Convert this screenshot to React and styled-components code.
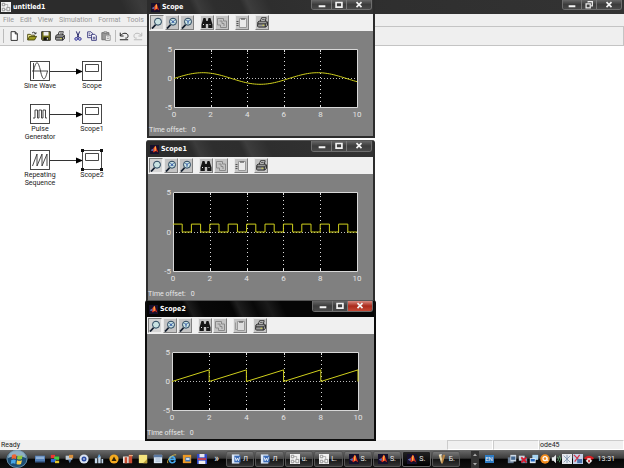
import React from 'react'
import styled, { createGlobalStyle, css } from 'styled-components'

const Global = createGlobalStyle`
  *{box-sizing:border-box;}
  body{
    margin:0;
    overflow:hidden;
    font-family:Roboto, "Liberation Sans", sans-serif;
    font-size:7px;
    line-height:8px;
    color:#222;
  }
  button{
    font:inherit;
    color:inherit;
    padding:0;
    border:0;
    background:none;
  }
  svg{display:block;flex-shrink:0;}
`

/* ---------- icons ---------- */

const Svg = ({size = 10, children, ...rest}) => <svg width={size} height={size}
  viewBox="0 0 12 12" fill="none" aria-hidden="true" {...rest}>{children}</svg>

const Matlab = ({size}) => <Svg size={size}>
  <rect width="12" height="12" fill="#15102c" />
  <path d="M1 7 L4 5 L7 1 L8 2 L11 10 L8 8 L5 10 L3.5 8Z" fill="#d8301e" />
  <path d="M1 7 L4 5 L5 7 L3.5 8Z" fill="#3f6fc0" />
  <path d="M6 4 L7 1 L8 3 L7.5 8 L6 8Z" fill="#ffb347" />
</Svg>

const Simulink = ({size}) => <Svg size={size}>
  <rect width="12" height="12" fill="#f2f2f2" />
  <path d="M1.5 1.5h3v3h-3zM7 6.5h3.5v4H7zM1.5 7.5h3v3h-3z" stroke="#888" />
  <path d="M4.5 3h3.5v3M4.5 9H7" stroke="#aaa" />
</Svg>

const NewFile = () => <Svg>
  <path d="M2.5 .8h5l2.5 2.5v8h-7.5z" fill="#fff" stroke="#111" />
  <path d="M7.5 .8v2.7H10" stroke="#111" />
</Svg>

const Open = () => <Svg>
  <path d="M.8 10.5V4h3l1 1h4v2" fill="#f4ef9a" stroke="#3c3a00" />
  <path d="M.8 10.8 3 6.5h8.5L9 10.8z" fill="#9c9a20" stroke="#3c3a00" />
  <path d="M6 2.5c2-2 3.500-1 4 .8M8.800 3.300h2V1.500" stroke="#222" />
</Svg>

const Save = () => <Svg>
  <path d="M.8.8h10.400v10.400H1.800l-1-1z" fill="#77751c" stroke="#111" />
  <path d="M3 1h6v4.500H3z" fill="#eee" />
  <path d="M3 7.500h6V11H3z" fill="#111" />
  <path d="M7 8.500h1.200v2H7z" fill="#eee" />
</Svg>

const Print = ({size}) => <Svg size={size}>
  <path d="M3.500 5 5 .8h5L8.800 5" fill="#fff" stroke="#222" />
  <path d="M1 5.500 2.500 4.500h8l1 1v3.500l-2 2H1.500L.6 10z" fill="#999" stroke="#222" />
  <path d="M1 7.500h8l2-1.500M9 7.500V11M5.500 2.500h3" stroke="#222" />
  <path d="M6 9h2" stroke="#dddb3a" />
</Svg>

const Cut = () => <Svg>
  <path d="M4 .5 7 8M8 .5 5 8" stroke="#252566" strokeWidth="1.200" />
  <circle cx="3.800" cy="9.500" r="1.600" stroke="#2d2d99" strokeWidth="1.200" />
  <circle cx="8.200" cy="9.500" r="1.600" stroke="#2d2d99" strokeWidth="1.200" />
</Svg>

const Copy = () => <Svg>
  <path d="M.8 1h4l1.700 1.700V8H.8z" fill="#fff" stroke="#252570" />
  <path d="M5.500 4h3.800l1.900 1.900v5.300H5.500z" fill="#fff" stroke="#252570" />
  <path d="M2 3.500h2M2 5.500h2.500M7 7.500h3M7 9.300h3" stroke="#252570" />
</Svg>

const Paste = () => <Svg>
  <path d="M1 2h8.500v8.500H1z" fill="#999" stroke="#666" />
  <path d="M3.500 1h3.500v2H3.500z" fill="#ccc" stroke="#777" />
  <path d="M5.500 5h5.500v6.300H5.500z" fill="#f4f4f4" stroke="#888" />
  <path d="M7 7h2.500M7 9h2.500" stroke="#999" />
</Svg>

// curved arrow over a base line, pointing left (undo) or right (redo)
const Undo = () => <Svg>
  <path d="M1.500 2v4h4M2 5.500C4.500 1.500 10.500 2 10.800 5.500S8.500 8.500 7.500 8.500M1 10.500h10"
    stroke="#222" strokeWidth="1.200" />
</Svg>

const Redo = () => <Svg>
  <path d="M10.500 2v4h-4M10 5.500C7.500 1.500 1.500 2 1.200 5.500S3.500 8.500 4.500 8.500M1 10.500h10"
    stroke="#bbb" strokeWidth="1.200" />
</Svg>

const Zoom = ({mark}) => <Svg size="12">
  <path d="M1 11.500 4.800 7.500" stroke="#111c2c" strokeWidth="1.800" />
  <circle cx="7" cy="4.700" r="3.500" fill="#c9e2e2" stroke="#27435c" />
  {mark === 'x' && <path d="M5.500 3.200l3 3M8.500 3.200l-3 3" stroke="#224a9e" />}
  {mark === 'y' && <path d="M5.500 3 7 4.700 8.500 3M7 4.700v2" stroke="#224a9e" />}
</Svg>

const Binoculars = () => <Svg size="12">
  <path d="M2.500 1h2l.8 3h1.400l.8-3h2l2 6.500V11H7.200V7H4.800v4H.5V7.500z" fill="#151515" />
  <path d="M2 7.500h1M8.500 7.500h1" stroke="#ddd" />
</Svg>

const Axes = () => <Svg size="12">
  <path d="M1.500 1.500h6v2.500h3v6.500h-6V8h-3z" stroke="#8a8a8a" />
  <path d="M3.500 4h2.500v2.500h2V9" stroke="#8a8a8a" />
</Svg>

const Params = ({list}) => <Svg size="12">
  <path d="M3.500 1.500h7v9h-7z" fill={list ? '#eaeaea' : '#ddd'} stroke="#999" />
  <path d="M5 1h4v1.800H5z" fill="#777" />
  {list ? <path d="M.5 4.500h2M.5 6.500h2M.5 8.500h2" stroke="#555" />
    : <path d="M1.500 2.500v7h2" stroke="#999" />}
</Svg>

/* ---------- title bar shared by every window ---------- */

const WindowButtons = ({active, restore, h = 9}) => <Caption $main={restore}>
  <CaptionButton $w={restore ? 18 : 19} $h={h} aria-label="Minimize">
    <Svg><path d="M2 7.500h8" stroke="#f4f4f4" strokeWidth="2.400" /></Svg>
  </CaptionButton>
  <CaptionButton $w={15} $h={h} aria-label={restore ? 'Restore' : 'Maximize'}>
    <Svg>
      {restore ? <path d="M2.500 4.500h5v5h-5zM5 3V2h5v5H8.500" stroke="#eee" strokeWidth="1.500" />
        : <path d="M2.500 3h7v5.500h-7z" stroke="#f4f4f4" strokeWidth="2" />}
    </Svg>
  </CaptionButton>
  <CaptionButton $w={25} $h={h} $close={active} aria-label="Close">
    <Svg><path d="M3 2.500 9 8.500M9 2.500 3 8.500" stroke="#f4f4f4" strokeWidth="2" /></Svg>
  </CaptionButton>
</Caption>

/* ---------- scopes ---------- */

const sine = []
for (let t = 0; t <= 10.001; t += 0.1) sine.push([t, Math.sin(t)])

const pulse = []
for (let t = 0; t < 10; t++) pulse.push([t, 1], [t + 0.5, 1], [t + 0.5, 0], [t + 1, 0])

const saw = []
for (let t = 0; t < 10; t += 2) saw.push([t, 0], [t + 2, 2])
saw.push([10, 0])

const PAD = {left: 25, right: 16, top: 18, bottom: 12}

const Chart = ({width, height, data}) => {
  const right = width - PAD.right
  const bottom = PAD.top + height
  const x = t => PAD.left + t * (right - PAD.left) / 10
  const y = v => PAD.top + (5 - v) * height / 10
  const snap = n => Math.round(n) + 0.5
  const points = data.map(([t, v]) => `${x(t)},${y(v) + 0.5}`).join(' ')

  return <svg width={width} height={bottom + PAD.bottom} role="img" aria-label="Signal plot">
    <rect x={PAD.left} y={PAD.top} width={right - PAD.left} height={height} fill="#000" />
    {[2, 4, 6, 8].map(t => <g key={t} stroke="#ddd">
      <path d={`M${snap(x(t))} ${PAD.top}V${bottom}`} strokeDasharray="1 3" />
      <path d={`M${snap(x(t))} ${PAD.top}v3M${snap(x(t))} ${bottom}v-2`} />
    </g>)}
    <path d={`M${PAD.left} ${snap(y(0))}H${right}`} stroke="#bbb" strokeDasharray="1 2" />
    <path d={`M${PAD.left + 0.5} ${PAD.top + 0.5}H${right + 0.5}V${bottom + 0.5}H${PAD.left + 0.5}Z`}
      stroke="#d8d8d8" fill="none" />
    <polyline points={points} fill="none" stroke="#d0d01c" />
    {[5, 0, -5].map(v => <Tick key={v} x={PAD.left - 2} y={y(v) + 3} textAnchor="end">{v}</Tick>)}
    {[0, 2, 4, 6, 8, 10].map(t => <Tick key={t} x={x(t)} y={bottom + 10} textAnchor="middle">{t}</Tick>)}
  </svg>
}

const Scope = ({title, x, y, w, plot, data, active}) => <ScopeWindow $x={x} $y={y} $w={w} $active={active}>
  <TitleBar $active={active} $h={y ? 16 : 14}>
    <Matlab size="9" />
    <Title>{title}</Title>
    <WindowButtons active={active} h={y ? 10 : 9} />
  </TitleBar>
  <ScopeTools>
    <Tool $pressed aria-label="Zoom"><Zoom /></Tool>
    <Tool aria-label="Zoom X-axis"><Zoom mark="x" /></Tool>
    <Tool aria-label="Zoom Y-axis"><Zoom mark="y" /></Tool>
    <Tool $group aria-label="Autoscale"><Binoculars /></Tool>
    <Tool aria-label="Save axes settings"><Axes /></Tool>
    <Tool $group aria-label="Parameters"><Params list={!active} /></Tool>
    <Tool $group aria-label="Print"><Print size="11" /></Tool>
  </ScopeTools>
  <Chart width={w - 4} height={plot} data={data} />
  <Offset><span>Time offset:</span><span>0</span></Offset>
</ScopeWindow>

/* ---------- model diagram ---------- */

const glyphs = {
  sine: <path d="M3.500 2v16M2 10h16M3.500 10C6-1 8-1 10.500 10S15 20 17.500 10" />,
  pulse: <path d="M3 14h2V6h2.500v8H9V6h2.500v8H13V6h2.500v8H17" />,
  saw: <path d="M2.500 16 7 4v12L12 4v12L17 4v12" />,
  scope: <path d="M3.500 3.500h13v7h-13z" />,
}

const Block = ({kind, x, y, label, selected}) => <Node $x={x} $y={y}>
  <svg width="20" height="20" fill="none" stroke="#333" strokeWidth=".9" overflow="visible">
    <rect x=".5" y=".5" width="19" height="19" fill="#fff" />
    {glyphs[kind]}
    {selected && <path d="M-1-1h3v3h-3zM18-1h3v3h-3zM-1 18h3v3h-3zM18 18h3v3h-3z"
      fill="#111" stroke="none" />}
  </svg>
  <NodeLabel>{label}</NodeLabel>
</Node>

const rows = [
  {y: 16, kind: 'sine', label: 'Sine Wave', out: 'Scope'},
  {y: 59, kind: 'pulse', label: 'Pulse Generator', out: 'Scope1'},
  {y: 105, kind: 'saw', label: 'Repeating Sequence', out: 'Scope2', selected: true},
]

/* ---------- task bar ---------- */

const Word = () => <Svg>
  <path d="M1 .5h9v11H1z" fill="#dce8f8" />
  <path d="M4 2h7.500v8H4z" fill="#3e6eb8" />
  <path d="M5 4l1.200 4L7.700 5l1.300 3 1.300-4" stroke="#fff" />
</Svg>

const quick = [
  ['Show desktop', <><path d="M0 2h12v8H0z" fill="#527db4" /><path d="M1 3h10v3H1z" fill="#8eb0d8" /><path d="M0 9h12v1H0z" fill="#233c61" /></>],
  ['Switch windows', <><path d="M1 1h5v4H1z" fill="#e33" /><path d="M5 3h6v4H5z" fill="#4c4" /><path d="M1 6h6v4H1z" fill="#2c69d0" /><path d="M6 8h5v3H6z" fill="#e1c62c" /></>],
  ['Tools', <><path d="M2 2h8v5H2z" fill="#bdc9d4" /><path d="M6 1h5v4H6z" fill="#d9913e" /><path d="M5 7h4l-2 4z" fill="#5f82aa" /></>],
  ['Media', <><circle cx="6" cy="6" r="5.500" fill="#dbe4f2" /><circle cx="6" cy="6" r="3" fill="#2b4ca5" /><circle cx="6" cy="6" r="1" fill="#fff" /></>],
  ['Levels', <><path d="M1 5h3v6H1zM5 3h3v8H5zM9 6h2v5H9z" fill="#c3d7ea" /><path d="M6 0l2 3-4 2z" fill="#63a5dd" /></>],
  ['Player', <><circle cx="6" cy="6" r="5.500" fill="#f4aa20" /><path d="M3 8.500 6 3l3 5.500z" fill="#322505" /></>],
  ['Office', <><path d="M0 3h7v8H0z" fill="#e8e3dd" /><path d="M2 4h3v7H2zM7 1h4v10H7z" fill="#c74b30" /><path d="M7 2h5" stroke="#f3cf9c" /></>],
  ['Notes', <><path d="M1 1h10v10H1z" fill="#f4e47e" /><path d="M6 11l5-5v5z" fill="#b9a03a" /></>],
  ['Notepad', <><path d="M1 1h10v10H1z" fill="#dce8f5" /><path d="M1 1h10v3H1z" fill="#5b7aa5" /><path d="M3 6h6M3 8.500h6" stroke="#93aac5" /></>],
  ['Internet', <><path d="M10 8C8 12 3 11 3 6.500S9 2 9.500 6.500H4" stroke="#45a8ed" strokeWidth="2" /><path d="M1 11C-1 7 7 0 11 1" stroke="#edc343" /></>],
  ['Outlook', <><path d="M1 1h10v10H1z" fill="#ee9a25" /><path d="M4 4h6v5H4z" fill="#3e79bd" /><path d="M5 5h4v2H5z" fill="#e8f0f8" /></>],
  ['Save', <><path d="M0 0h12v12H0z" fill="#3148c8" /><path d="M3 0h6v4H3z" fill="#e7e7ef" /><path d="M1 5h10v2H1z" fill="#d43e42" /><path d="M2 8h8v4H2z" fill="#eee" /></>],
]

const tasks = [
  [<Word />, 'Л'], [<Word />, 'Л'], [<Simulink />, 'u.'], [<Simulink />, 'L.'],
  [<Matlab />, 'S.'], [<Matlab />, 'S.'], [<Matlab />, 'S.', true],
  [<Svg><path d="M2 1l3 10h2L5 1z" fill="#e9d7a7" /><path d="M10 1 7 11H5L7 1z" fill="#b98645" /><path d="M3 1h3" stroke="#fff" /></Svg>, 'Б.'],
]

const tray = [
  ['Display', <><path d="M1 4h7v7H1z" fill="#6b7f97" /><path d="M4 1h7v8H4z" fill="#cdd9e6" /><path d="M5 3h5v4H5z" fill="#446891" /></>],
  ['Network disconnected', <><path d="M1 2h7v6H1z" fill="#cbd3de" /><path d="M4 5h7v6H4z" fill="#71849e" /><path d="M4 4l6 6M10 4l-6 6" stroke="#e0162b" strokeWidth="2" /></>],
  ['Network', <><path d="M4 1h7v6H4z" fill="#a8d6f4" /><path d="M1 5h7v6H1z" fill="#e1edf8" /><path d="M2 6h5v3H2z" fill="#2265bd" /></>],
  ['Antivirus', <><circle cx="6" cy="6" r="5.700" fill="#f28d1f" /><circle cx="6" cy="5.500" r="2.400" stroke="#fff" strokeWidth="1.400" /><path d="M8.500 4v4h1.500" stroke="#fff" /></>],
  ['Volume', <><path d="M1 4h2l3-3v10L3 8H1z" fill="#e5e8ea" /><path d="M8 3.500q2 2.500 0 5M10 2q3 4 0 8" stroke="#66b97a" /></>],
  ['Simulink', <><path d="M0 0h12v12H0z" fill="#e6e9ee" /><path d="M2 2l8 8M10 2 2 10M6 1v10" stroke="#7c93ae" /></>],
  ['Update', <><path d="M0 0h12v12H0z" fill="#c6d2e8" /><path d="M1 1l7 7M8 1 2 9" stroke="#d3384c" strokeWidth="1.500" /><path d="M5 6h6v5H5z" fill="#4d74ad" /></>],
  ['Umbrella', <><path d="M0 5.500C2 1 10 1 12 5.500L9 7H3z" fill="#d81e23" /><path d="M4 5h4v2l2 1-4 4-4-4 2-1z" fill="#f0f0f0" /><path d="M5 7h2v3H5z" fill="#c5232a" /></>],
]

export default function App(){
  return <Desktop>
    <Global />
    <TitleBar $h={14} $main>
      <Simulink size="10" />
      <Title>untitled1</Title>
      <WindowButtons restore />
    </TitleBar>
    <Menu>
      {['File', 'Edit', 'View', 'Simulation', 'Format', 'Tools'].map(m => <button key={m}>{m}</button>)}
    </Menu>
    <MainTools>
      <Grip />
      <MainTool aria-label="New"><NewFile /></MainTool>
      <Divider />
      <MainTool aria-label="Open"><Open /></MainTool>
      <MainTool aria-label="Save"><Save /></MainTool>
      <MainTool aria-label="Print"><Print /></MainTool>
      <Divider />
      <MainTool aria-label="Cut"><Cut /></MainTool>
      <MainTool aria-label="Copy"><Copy /></MainTool>
      <MainTool aria-label="Paste"><Paste /></MainTool>
      <Divider />
      <MainTool aria-label="Undo"><Undo /></MainTool>
      <MainTool aria-label="Redo"><Redo /></MainTool>
    </MainTools>
    <Model>
      {rows.map(r => <React.Fragment key={r.out}>
        <Block kind={r.kind} x={10} y={r.y} label={r.label} />
        <Wire $y={r.y + 6} width="33" height="8">
          <path d="M0 4.500h28" stroke="#333" />
          <path d="M26 1.500 33 4.500 26 7.500z" fill="#000" />
        </Wire>
        <Block kind="scope" x={62} y={r.y} label={r.out} selected={r.selected} />
      </React.Fragment>)}
    </Model>
    <Status>
      <Ready>Ready</Ready>
      <Cell $w={46} />
      <Cell $w={46} />
      <Cell $w={85}>ode45</Cell>
    </Status>
    <TaskBar>
      <Start aria-label="Start">
        <svg width="22" height="18" viewBox="-1 0 22 18">
          <ellipse cx="10" cy="9" rx="10.500" ry="9" fill="#1d4e74" />
          <path d="M1 8a9 8 0 0 1 18 0Q10 4 1 8z" fill="#8fb0c4" />
          <ellipse cx="10" cy="9" rx="10" ry="8.500" fill="none" stroke="#7898ac" strokeWidth=".8" />
          <path d="M5 5q2.500-1.500 4.500 0L9 9Q7 8 4.500 9z" fill="#ee6532" />
          <path d="M10.500 5.200q2.500 1.300 5 0L15 9q-2.500 1-5 0z" fill="#91c83e" />
          <path d="M4.300 10q2.500-1 4.500 0l-.5 4q-2-1.500-4.500 0z" fill="#49a6e8" />
          <path d="M10 10.200q2.500 1 5 0L14 14q-2.500 1-4.500 0z" fill="#fbd04a" />
        </svg>
      </Start>
      <Quick>
        {quick.map(([name, art]) => <button key={name} aria-label={name}><Svg>{art}</Svg></button>)}
      </Quick>
      <More aria-label="More icons">»</More>
      <Tasks>
        {tasks.map(([icon, text, on], i) => <Task key={i} $on={on}>{icon}{text}</Task>)}
      </Tasks>
      <Spacer />
      <Scroll>
        <button aria-label="Scroll up"><Svg size="6"><path d="M2 8 6 3l4 5z" fill="#aaa" /></Svg></button>
        <button aria-label="Scroll down"><Svg size="6"><path d="M2 4l4 5 4-5z" fill="#aaa" /></Svg></button>
      </Scroll>
      <Lang>EN</Lang>
      <Tray>
        {tray.map(([name, art]) => <button key={name} aria-label={name}><Svg>{art}</Svg></button>)}
      </Tray>
      <Clock>13:31</Clock>
    </TaskBar>
    <Scope title="Scope" x={147} y={0} w={228} plot={58} data={sine} />
    <Scope title="Scope1" x={146} y={140} w={229} plot={79} data={pulse} />
    <Scope title="Scope2" x={145} y={300} w={231} plot={58} data={saw} active />
  </Desktop>
}

const Desktop = styled.div`
  position:relative;
  display:flex;
  flex-direction:column;
  min-height:100vh;
  background:#fff;
`
const TitleBar = styled.header`
  display:flex;
  align-items:center;
  height:${p=> p.$h}px;
  padding-left:${p=> p.$main ? 1 : 2}px;
  gap:2px;
  color:#fff;
  background:${p=> p.$active
    ? 'linear-gradient(65deg, #060606 18%, #1c1c1c 20%, #080808 25%, #050505 38%, #1e1e1e 41%, #080808 48%, #1a1a1a 54%, #060606 60%)'
    : 'linear-gradient(65deg, #2c2c2c 20%, #3b3b3b 23%, #2e2e2e 30%, #2d2d2d 42%, #3d3d3d 45%, #2e2e2e 54%, #333)'};
`
const Title = styled.h1`
  flex:1;
  margin:0;
  font:bold 7px/10px "DejaVu Sans Condensed", "DejaVu Sans", sans-serif;
`
const Caption = styled.div`
  display:flex;
  align-self:flex-start;
  margin-right:${p=> p.$main ? 2 : 1}px;
  border:1px solid #6e6e6e;
  border-top:0;
  border-radius:0 0 3px 3px;
  overflow:hidden;
`
const CaptionButton = styled.button`
  display:flex;
  justify-content:center;
  width:${p=> p.$w}px;
  height:${p=> p.$h}px;
  background:linear-gradient(${p=> p.$close ? '#d98a80, #a92a1c 50%, #c64935' : '#666, #3c3c3c 50%, #494949'});
  & + &{border-left:1px solid #777;}
`
const Menu = styled.nav`
  display:flex;
  align-items:center;
  gap:6px;
  height:12px;
  padding-left:3px;
  background:#efefef;
  color:#999;
`
const MainTools = styled.div`
  display:flex;
  align-items:center;
  height:20px;
  padding-left:3px;
  background:#efefef;
  border:1px solid #c4c4c4;
  border-left:0;
`
const MainTool = styled.button`
  display:flex;
  justify-content:center;
  width:14px;
`
const Grip = styled.i`
  width:2px;
  height:14px;
  margin-right:2px;
  border-left:1px solid #bbb;
`
const Divider = styled.i`
  width:1px;
  height:12px;
  margin:0 1px 0 2px;
  background:#bbb;
`
const Model = styled.main`
  position:relative;
  flex:1;
`
const Node = styled.div`
  position:absolute;
  left:${p=> p.$x}px;
  top:${p=> p.$y - 1}px;
  display:flex;
  flex-direction:column;
  align-items:center;
  gap:1px;
  width:60px;
`
const NodeLabel = styled.span`
  width:36px;
  text-align:center;
`
const Wire = styled.svg`
  position:absolute;
  left:50px;
  top:${p=> p.$y - 1}px;
`
const Status = styled.footer`
  display:flex;
  height:10px;
  background:#f0f0f0;
`
const Ready = styled.span`
  flex:1;
  padding:1px;
`
const Cell = styled.span`
  width:${p=> p.$w}px;
  padding:1px 0;
  border:1px solid #ccc;
  border-right-color:#fff;
  border-bottom-color:#fff;
  line-height:7px;
`
const TaskBar = styled.footer`
  display:flex;
  align-items:center;
  height:18px;
  padding:0 9px 0 6px;
  color:#eee;
  background:linear-gradient(#6a6a6a, #3b3b3b 45%, #050505 52%, #111);
`
const Start = styled.button`
  width:22px;
`
const Quick = styled.div`
  display:flex;
  justify-content:space-between;
  width:172px;
  margin-left:7px;
`
const More = styled.button`
  width:19px;
  font-size:10px;
`
const Tasks = styled.div`
  display:grid;
  grid-template-columns:repeat(8, 1fr);
  gap:1px;
  width:234px;
`
const Task = styled.button`
  display:flex;
  align-items:center;
  gap:2px;
  height:16px;
  padding-left:4px;
  border:1px solid ${p=> p.$on ? '#666' : '#555'};
  border-radius:2px;
  background:${p=> p.$on ? 'linear-gradient(#222, #000)' : 'linear-gradient(#777, #444 48%, #151515 52%, #333)'};
`
const Spacer = styled.i`
  flex:1;
`
const Scroll = styled.div`
  display:flex;
  flex-direction:column;
  align-items:center;
  gap:3px;
  padding:1px;
  background:#333;
`
const Lang = styled.button`
  width:9px;
  margin:0 13px 0 6px;
  background:#2e7cc4;
  font-size:6px;
`
const Tray = styled.div`
  display:flex;
  gap:1px;
  margin-right:4px;
`
const Clock = styled.time`
  font-size:7px;
`
const ScopeWindow = styled.section`
  position:absolute;
  left:${p=> p.$x}px;
  top:${p=> p.$y}px;
  width:${p=> p.$w}px;
  padding-top:${p=> p.$y ? 1 : 0}px;
  border:2px solid ${p=> p.$active ? '#0c0c0c' : '#2c2c2c'};
  border-top:0;
  background:#808080;
  color:#e8e8e8;
  ${p=> p.$y > 0 && css`
    border-radius:3px 3px 0 0;
    box-shadow:inset 0 1px 0 #555;
  `}
`
const ScopeTools = styled.div`
  display:flex;
  align-items:center;
  gap:1px;
  height:17px;
  padding-left:1px;
  background:#f0f0f0;
`
const Tool = styled.button`
  display:flex;
  align-items:center;
  justify-content:center;
  width:14px;
  height:15px;
  margin-left:${p=> p.$group ? 5 : 0}px;
  background:${p=> p.$pressed ? '#d4d4d4' : '#c4c4c4'};
  border:1px solid;
  border-color:${p=> p.$pressed ? '#808080 #eee #eee #808080' : '#e8e8e8 #808080 #808080 #e8e8e8'};
`
const Offset = styled.div`
  display:flex;
  gap:5px;
  padding:7px 0 2px;
`
const Tick = styled.text`
  font-size:8px;
  fill:#e4e4e4;
`
